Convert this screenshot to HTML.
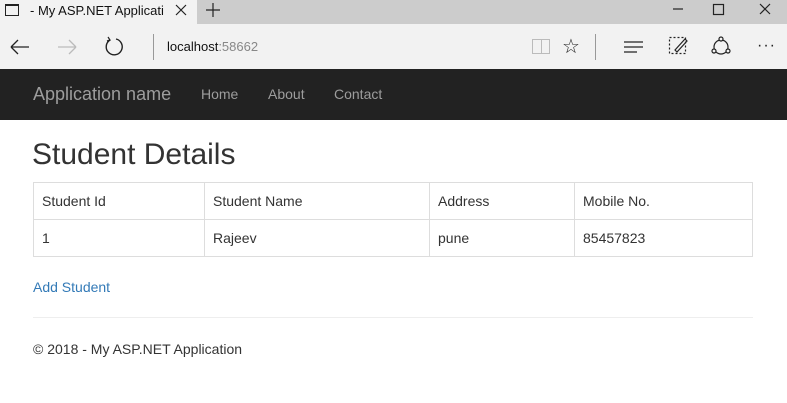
<!DOCTYPE html>
<html><head><style>
*{margin:0;padding:0;box-sizing:border-box}
body{width:787px;height:403px;overflow:hidden;font-family:"Liberation Sans",Arial,sans-serif;background:#fff;position:relative;color:#333}
.abs{position:absolute}
</style></head><body>
<div class="abs" style="left:0;top:0;width:787px;height:24px;background:#cccccc"></div>
<div class="abs" style="left:0;top:0;width:197px;height:25px;background:#f2f2f2"></div>
<div class="abs" style="left:5px;top:4px;width:14px;height:12px;border:1px solid #222;border-top-width:2px"></div>
<div class="abs" style="left:30px;top:3px;font-size:13px;color:#111;white-space:nowrap;width:134px;overflow:hidden">- My ASP.NET Application</div>
<svg class="abs" style="left:0;top:0" width="787" height="69" fill="none" stroke="#222" stroke-width="1.2">
<path d="M176 5l10 10M186 5l-10 10"/>
<path d="M213 3v14M206 10h14"/>
<path d="M673 9h10"/>
<rect x="713.5" y="4.5" width="10" height="10"/>
<path d="M760 4l10 10M770 4l-10 10"/>
<path d="M11 47h18M11 47l7-7M11 47l7 7" stroke-width="1.3"/>
<path d="M58 47h18M76 47l-7-7M76 47l-7 7" stroke="#bbb" stroke-width="1.3"/>
<path d="M110 40a8 8 0 1 0 6 -1" stroke-width="1.4"/><path d="M108 37l2 3-3 1" stroke-width="1.2"/>
<path d="M624 42h19M624 47h19M624 52h13" stroke-width="1.3"/>
<rect x="669.5" y="37.5" width="16" height="16" stroke-dasharray="2 2"/>
<path d="M675 50l10-11 2 2-10 11z"/>
<circle cx="721" cy="47" r="7"/>
<circle cx="721" cy="39" r="2" fill="#f2f2f2"/><circle cx="714" cy="51" r="2" fill="#f2f2f2"/><circle cx="728" cy="51" r="2" fill="#f2f2f2"/>
</svg>
<div class="abs" style="left:0;top:24px;width:787px;height:45px;background:#f2f2f2;z-index:-1"></div>
<div class="abs" style="left:153px;top:34px;width:1px;height:26px;background:#999"></div>
<div class="abs" style="left:167px;top:39px;font-size:13px;color:#111">localhost<span style="color:#888">:58662</span></div>
<div class="abs" style="left:532px;top:39px;width:18px;height:15px;border:1.5px solid #bbb"></div>
<div class="abs" style="left:541px;top:39px;width:1px;height:15px;background:#bbb"></div>
<div class="abs" style="left:562px;top:34px;font-size:20px;color:#222">☆</div>
<div class="abs" style="left:595px;top:34px;width:1px;height:26px;background:#999"></div>
<div class="abs" style="left:757px;top:37px;font-size:16px;color:#222;letter-spacing:1px">···</div>
<div class="abs" style="left:0;top:69px;width:787px;height:51px;background:#222"></div>
<div class="abs" style="left:33px;top:84px;font-size:18px;color:#9d9d9d">Application name</div>
<div class="abs" style="left:201px;top:86px;font-size:14px;color:#9d9d9d">Home</div>
<div class="abs" style="left:268px;top:86px;font-size:14px;color:#9d9d9d">About</div>
<div class="abs" style="left:334px;top:86px;font-size:14px;color:#9d9d9d">Contact</div>
<div class="abs" style="left:32px;top:138px;font-size:30px;color:#333">Student Details</div>
<table class="abs" style="left:33px;top:182px;width:720px;border-collapse:collapse;font-size:14px">
<tr style="height:37px"><td style="border:1px solid #ddd;padding-left:8px;width:171px">Student Id</td><td style="border:1px solid #ddd;padding-left:8px;width:225px">Student Name</td><td style="border:1px solid #ddd;padding-left:8px;width:145px">Address</td><td style="border:1px solid #ddd;padding-left:8px">Mobile No.</td></tr>
<tr style="height:37px"><td style="border:1px solid #ddd;padding-left:8px">1</td><td style="border:1px solid #ddd;padding-left:8px">Rajeev</td><td style="border:1px solid #ddd;padding-left:8px">pune</td><td style="border:1px solid #ddd;padding-left:8px">85457823</td></tr>
</table>
<div class="abs" style="left:33px;top:279px;font-size:14px;color:#337ab7">Add Student</div>
<div class="abs" style="left:33px;top:317px;width:720px;height:1px;background:#eee"></div>
<div class="abs" style="left:33px;top:341px;font-size:14px;color:#333">© 2018 - My ASP.NET Application</div>
</body></html>
